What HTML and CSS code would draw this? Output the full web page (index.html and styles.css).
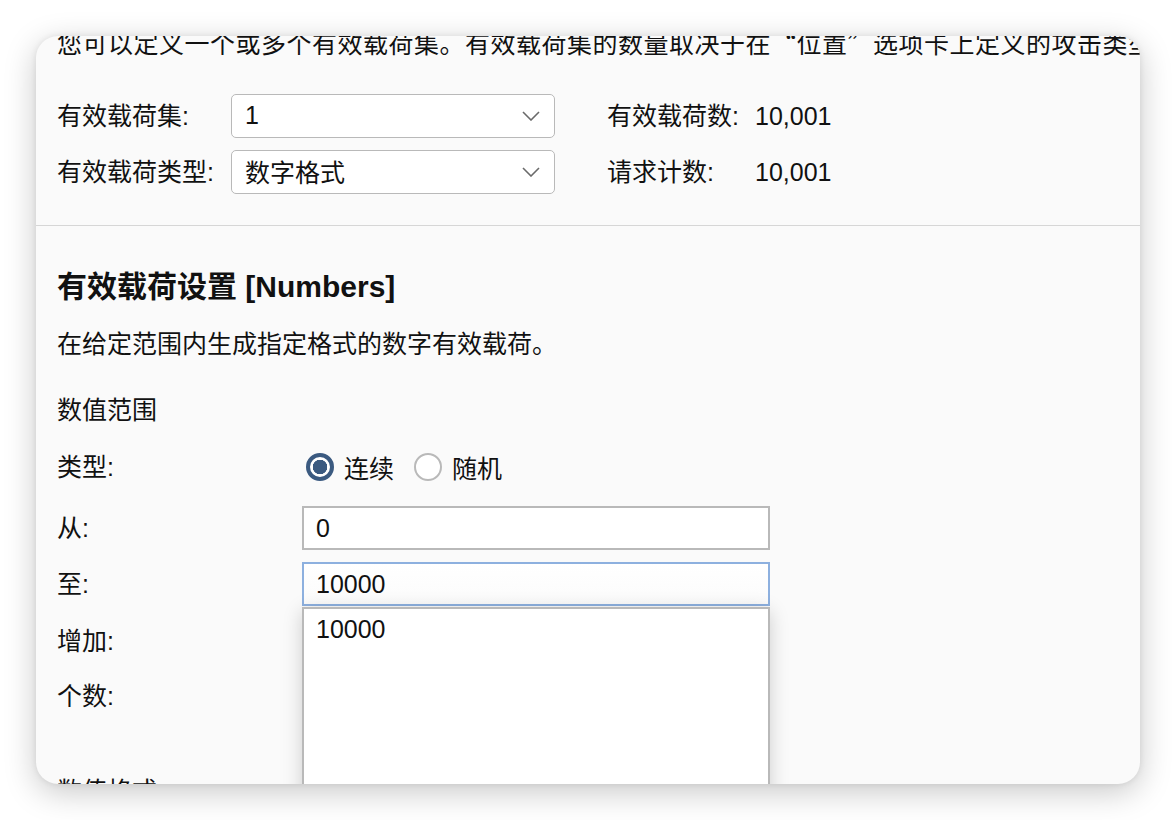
FILE: index.html
```html
<!DOCTYPE html>
<html lang="zh">
<head>
<meta charset="utf-8">
<link rel="stylesheet" href="styles.css">
</head>
<body>
<div class="window">
  <div class="top">
    <p class="intro">您可以定义一个或多个有效载荷集。有效载荷集的数量取决于在<span class="cjk">“</span>位置<span class="cjk">”</span>选项卡上定义的攻击类型。每个有效载荷集可使用多种有效载荷类型。</p>
    <div class="top-grid">
      <span class="lbl">有效载荷集:</span>
      <div class="select"><span>1</span><svg class="chev" width="18" height="10" viewBox="0 0 18 10"><polyline points="1,1 9,9 17,1" fill="none" stroke="#6a6a6a" stroke-width="1.6"/></svg></div>
      <span class="lbl rl">有效载荷数:</span>
      <span class="lbl">10,001</span>
      <span class="lbl">有效载荷类型:</span>
      <div class="select"><span>数字格式</span><svg class="chev" width="18" height="10" viewBox="0 0 18 10"><polyline points="1,1 9,9 17,1" fill="none" stroke="#6a6a6a" stroke-width="1.6"/></svg></div>
      <span class="lbl rl">请求计数:</span>
      <span class="lbl">10,001</span>
    </div>
  </div>
  <div class="settings">
    <h2 class="heading">有效载荷设置 [Numbers]</h2>
    <p class="desc">在给定范围内生成指定格式的数字有效载荷。</p>
    <p class="group">数值范围</p>
    <div class="form">
      <span class="lbl">类型:</span>
      <div class="radios">
        <span class="radio on"></span><span class="rtext">连续</span>
        <span class="radio"></span><span class="rtext">随机</span>
      </div>
      <span class="lbl">从:</span>
      <div class="input">0</div>
      <span class="lbl">至:</span>
      <div class="input-wrap">
        <div class="input focus">10000</div>
        <div class="suggest"><div class="item">10000</div></div>
      </div>
      <span class="lbl">增加:</span>
      <div></div>
      <span class="lbl">个数:</span>
      <div></div>
    </div>
    <p class="group fmt">数值格式</p>
  </div>
</div>
</body>
</html>
```
FILE: styles.css
```css
* { box-sizing: border-box; }
html, body { margin: 0; padding: 0; background: #ffffff; }
body {
  padding: 36px;
  font-family: "Liberation Sans", "Noto Sans CJK SC", sans-serif;
  font-size: 25px;
  color: #111;
}
.cjk { font-family: "Noto Sans CJK SC", sans-serif; }
.window {
  width: 1104px;
  height: 748px;
  background: #fafafa;
  border-radius: 22px;
  overflow: hidden;
  box-shadow: 0 8px 32px rgba(0,0,0,0.22), 0 0 6px rgba(0,0,0,0.08);
}
.top {
  border-bottom: 1px solid #d6d6d6;
  padding: 0 0 31px 21px;
}
.intro {
  margin: -9px 0 0 0;
  height: 30px;
  line-height: 30px;
  letter-spacing: 0.5px;
  white-space: nowrap;
  overflow: hidden;
}
.top-grid {
  margin-top: 37px;
  display: grid;
  grid-template-columns: 174px 324px 200px auto;
  grid-auto-rows: 44px;
  row-gap: 12px;
  align-items: center;
}
.lbl { line-height: 36px; white-space: nowrap; }
.rl { padding-left: 52px; }
.select {
  height: 44px;
  background: #fff;
  border: 1.5px solid #b9b9b9;
  border-radius: 5px;
  display: flex;
  align-items: center;
  justify-content: space-between;
  padding: 0 14px 2px 13px;
}
.chev { display: block; margin-top: 2px; }
.settings {
  padding: 43px 0 0 21px;
}
.heading {
  margin: 0;
  font-size: 30px;
  font-weight: bold;
  line-height: 36px;
}
.desc { margin: 21px 0 0; line-height: 36px; }
.group { margin: 30px 0 0; line-height: 36px; }
.form {
  margin-top: 17px;
  display: grid;
  grid-template-columns: 245px 468px;
  grid-template-rows: 44px 61px 56px 57px 55px;
  align-items: end;
}
.form .lbl { line-height: 44px; }
.radios { display: flex; align-items: center; height: 44px; }
.radios .radio:first-child { margin-left: 4px; }
.radio {
  width: 28px; height: 28px;
  border-radius: 50%;
  border: 2px solid #b9b9b9;
  background: #fff;
  margin-right: 10px;
}
.radio.on {
  border: 4px solid #3b5a80;
  background: radial-gradient(circle, #3b5a80 0 7px, #ffffff 7.5px);
}
.rtext { margin-right: 20px; }
.input {
  height: 44px;
  background: #fff;
  border: 2px solid #b9b9b9;
  padding-left: 12px;
  line-height: 40px;
}
.input.focus { border-color: #8db0df; background: linear-gradient(#fff, #fbfbfb); }
.input-wrap { position: relative; height: 44px; }
.suggest {
  position: absolute;
  left: 0; top: 45px;
  width: 468px;
  height: 240px;
  background: #fff;
  border: 2px solid #b9b9b9;
  box-shadow: 0 4px 18px rgba(0,0,0,0.18);
  z-index: 5;
}
.item { padding-left: 12px; line-height: 40px; }
.fmt { margin-top: 55px; }
```
